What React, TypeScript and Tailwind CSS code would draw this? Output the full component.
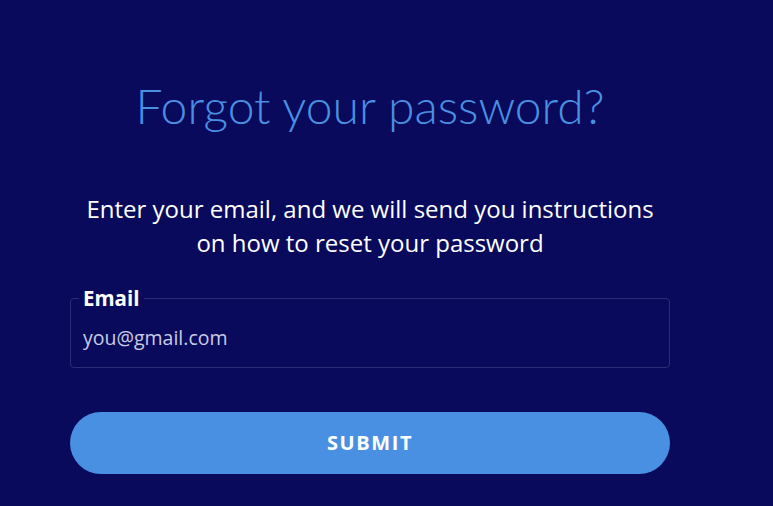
import React, { useState } from 'react';

const App: React.FC = () => {
  const [email, setEmail] = useState('');

  return (
    <div className="w-screen h-screen bg-[#0a0a5c] overflow-hidden font-['Open_Sans',sans-serif]">
      <div className="w-[600px] ml-[70px] pt-[74px] flex flex-col">
        <h1 className="text-center text-[48px] leading-[64px] font-light text-[#4a90e2] font-['Lato',sans-serif]">
          Forgot your password?
        </h1>

        <p className="mt-[54px] text-center text-[24px] leading-[34px] text-white">
          Enter your email, and we will send you instructions
          <br />
          on how to reset your password
        </p>

        <fieldset className="mt-[27px] h-[81px] border border-[#2c2c78] rounded-[4px] px-[8px]">
          <legend className="px-[4px] text-[20.5px] leading-[22px] font-bold text-white">
            Email
          </legend>
          <input
            type="email"
            value={email}
            onChange={(e) => setEmail(e.target.value)}
            placeholder="you@gmail.com"
            className="w-full mt-[15px] bg-transparent outline-none text-[19.5px] leading-[28px] px-[4px] text-white placeholder:text-[#c8cce4]"
          />
        </fieldset>

        <button className="mt-[44px] h-[62px] rounded-full bg-[#4a90e2] text-white text-[20px] font-bold tracking-[0.08em]">
          SUBMIT
        </button>
      </div>
    </div>
  );
};

export default App;
